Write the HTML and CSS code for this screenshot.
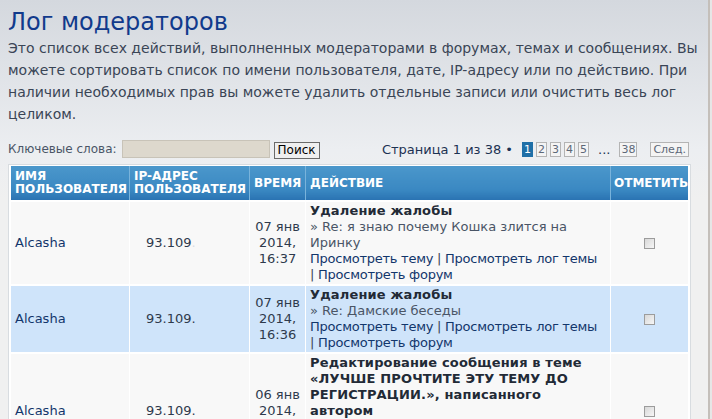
FILE: index.html
```html
<!DOCTYPE html>
<html lang="ru">

<head>
    <meta charset="UTF-8">
    <title>Лог модераторов</title>
    <link rel="stylesheet" href="styles.css">
</head>

<body>
    <div class="page">
        <h1 class="pageTitle">Лог модераторов</h1>
        <p class="intro">Это список всех действий, выполненных модераторами в форумах, темах и сообщениях. Вы
            можете сортировать список по имени пользователя, дате, IP-адресу или по действию. При наличии необходимых
            прав вы можете удалить отдельные записи или очистить весь лог целиком.</p>

        <div class="toolbar">
            <div class="searchBox">
                <span class="searchLabel">Ключевые слова:</span>
                <input type="text" class="searchInput">
                <button class="searchButton">Поиск</button>
            </div>
            <div class="pagination">
                <span class="pageInfo">Страница <b>1</b> из <b>38</b> &bull;</span>
                <span class="pageBox active">1</span>
                <span class="pageBox">2</span>
                <span class="pageBox">3</span>
                <span class="pageBox">4</span>
                <span class="pageBox">5</span>
                <span class="dots">...</span>
                <span class="pageBox">38</span>
                <span class="pageBox next">След.</span>
            </div>
        </div>

        <div class="tableWrap">
            <table class="logTable">
                <thead>
                    <tr>
                        <th class="colUser">Имя пользователя</th>
                        <th class="colIp">IP-адрес пользователя</th>
                        <th class="colTime">Время</th>
                        <th class="colAction">Действие</th>
                        <th class="colMark">Отметить</th>
                    </tr>
                </thead>
                <tbody>
                    <tr class="rowLight">
                        <td><a class="userLink">Alcasha</a></td>
                        <td class="ip">93.109<span class="hidden">.</span></td>
                        <td class="time">07 янв 2014, 16:37</td>
                        <td class="action">
                            <strong>Удаление жалобы</strong><br>
                            <span class="topic">» Re: я знаю почему Кошка злится на Иринку</span><br>
                            <span class="links"><a>Просмотреть тему</a> <span class="sep">| <a>Просмотреть лог темы</a></span> <span class="sep">| <a>Просмотреть форум</a></span></span>
                        </td>
                        <td class="mark"><input type="checkbox"></td>
                    </tr>
                    <tr class="rowBlue">
                        <td><a class="userLink">Alcasha</a></td>
                        <td class="ip">93.109.</td>
                        <td class="time">07 янв 2014, 16:36</td>
                        <td class="action">
                            <strong>Удаление жалобы</strong><br>
                            <span class="topic">» Re: Дамские беседы</span><br>
                            <span class="links"><a>Просмотреть тему</a> <span class="sep">| <a>Просмотреть лог темы</a></span> <span class="sep">| <a>Просмотреть форум</a></span></span>
                        </td>
                        <td class="mark"><input type="checkbox"></td>
                    </tr>
                    <tr class="rowLight">
                        <td><a class="userLink">Alcasha</a></td>
                        <td class="ip">93.109.</td>
                        <td class="time">06 янв 2014, 19:12</td>
                        <td class="action">
                            <strong>Редактирование сообщения в теме «ЛУЧШЕ ПРОЧТИТЕ ЭТУ ТЕМУ ДО РЕГИСТРАЦИИ.», написанного автором</strong><br>
                            <span class="topic">Alcasha</span><br>
                            <span class="links"><a>Просмотреть тему</a> <span class="sep">| <a>Просмотреть лог темы</a></span> <span class="sep">| <a>Просмотреть форум</a></span></span>
                        </td>
                        <td class="mark"><input type="checkbox"></td>
                    </tr>
                </tbody>
            </table>
        </div>
    </div>
</body>

</html>
```

FILE: styles.css
```css
html {
    background-color: #e6e6e6;
}

body {
    margin: 0;
    font-family: "DejaVu Sans", Verdana, sans-serif;
    color: #3a4556;
}

.page {
    width: 700px;
    min-height: 419px;
    padding: 8px 0 0 8px;
    background: linear-gradient(#d4d8de 0, #eceef1 150px, #f0f0f0 200px);
    border-right: 2px solid #c4bfba;
}

.pageTitle {
    margin: 0;
    font-size: 24px;
    line-height: 29px;
    font-weight: normal;
    color: #113a8c;
}

.intro {
    margin: 0;
    width: 690px;
    font-size: 14px;
    line-height: 22px;
}

.toolbar {
    display: flex;
    justify-content: space-between;
    align-items: center;
    width: 681px;
    margin-top: 13px;
    height: 22px;
}

.searchBox {
    display: flex;
    align-items: center;
}

.searchLabel {
    font-size: 12px;
    color: #4a5566;
}

.searchInput {
    width: 146px;
    height: 16px;
    margin: 0 4px 0 5px;
    padding: 0;
    border: 1px solid #c8c3b8;
    background-color: #ddd8cd;
}

.searchButton {
    height: 17px;
    padding: 0 3px;
    margin-top: 2px;
    font-family: "DejaVu Sans", Verdana, sans-serif;
    font-size: 12px;
    color: #000;
    background-color: #efefef;
    border: 1px solid #6a6a6a;
    border-radius: 0;
}

.pagination {
    display: flex;
    align-items: center;
    gap: 3px;
}

.pageInfo {
    font-size: 13px;
    color: #1c3252;
    margin-right: 6px;
}

.pageInfo b {
    font-weight: normal;
}

.pageBox {
    font-size: 11px;
    line-height: 13px;
    padding: 0 1px;
    border: 1px solid #b4b4b4;
    color: #5d6878;
    background-color: #f4f4f4;
}

.pageBox.active {
    color: #fff;
    background-color: #1f6fa7;
    border-color: #1f6fa7;
}

.dots {
    margin: 0 6px;
    font-size: 13px;
    color: #1c3252;
}

.pageBox.next {
    margin-left: 10px;
    padding: 0 2px;
}

.tableWrap {
    width: 677px;
    margin-top: 4px;
    padding: 1px 2px 2px;
    border: 1px solid #d8dce0;
    background-color: #fff;
}

.logTable {
    width: 677px;
    border-collapse: collapse;
    table-layout: fixed;
}

.logTable th {
    height: 34px;
    padding: 0 4px;
    text-align: left;
    font-size: 12px;
    line-height: 13px;
    text-transform: uppercase;
    color: #fff;
    background: linear-gradient(#4b97cb, #3a88c2 70%, #2a73b2);
    border-left: 1px solid #79b3db;
}

.logTable th:first-child {
    border-left: none;
}

.colUser {
    width: 110px;
}

.colIp {
    width: 111px;
}

.colTime {
    width: 47px;
}

.colAction {
    width: 296px;
}

.logTable th.colMark {
    padding: 0 2px 0 3px;
    white-space: nowrap;
}

.logTable td {
    padding: 1px 4px;
    font-size: 13px;
    line-height: 16px;
    vertical-align: middle;
    border-left: 1px solid #ffffff;
    border-top: 2px solid #ffffff;
}

.logTable td:first-child {
    border-left: none;
}

.rowLight td {
    background-color: #f8f8f8;
}

.rowBlue td {
    background-color: #cfe4fa;
}

.userLink {
    color: #12366b;
}

.logTable td.ip {
    padding-left: 16px;
    color: #2e3a4c;
}

.hidden {
    color: #d8dde4;
}

.time {
    text-align: center;
    color: #2e3a4c;
}

.action strong {
    color: #222a36;
    letter-spacing: 0.15px;
}

.topic {
    color: #4a5566;
}

.links {
    letter-spacing: -0.25px;
}

.sep {
    white-space: nowrap;
}

.action a {
    color: #12366b;
}

.mark {
    text-align: center;
}

.mark input {
    appearance: none;
    width: 11px;
    height: 11px;
    margin: 0;
    border: 1px solid #9c9c9c;
    border-radius: 0;
    background: linear-gradient(135deg, #d8d8d8, #f6f6f6);
    vertical-align: middle;
}
```
